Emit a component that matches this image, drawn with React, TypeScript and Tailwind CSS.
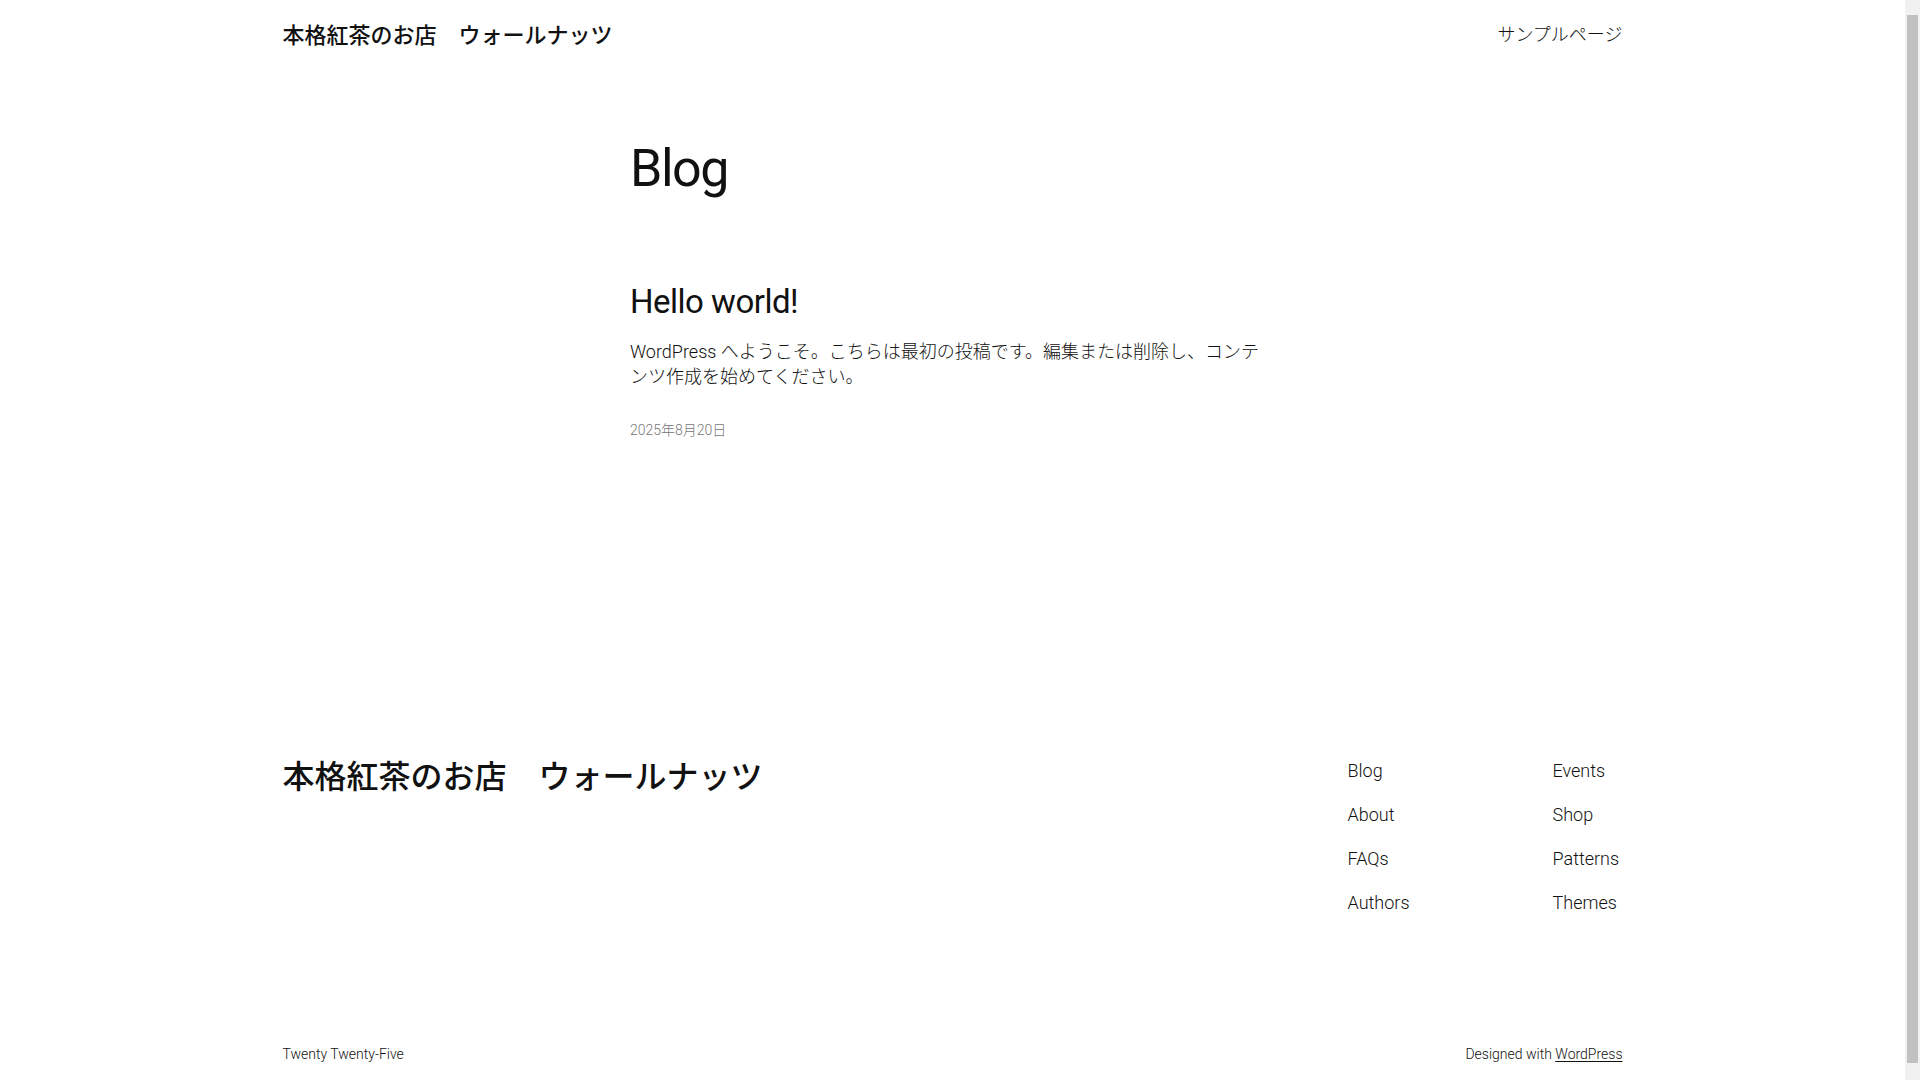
import React from 'react';

const footerCol1 = ['Blog', 'About', 'FAQs', 'Authors'];
const footerCol2 = ['Events', 'Shop', 'Patterns', 'Themes'];

export default function App() {
  return (
    <div className="h-screen flex overflow-hidden bg-white text-[#111111] font-[Roboto,'Noto_Sans_CJK_JP',sans-serif]">
      <div className="flex-1 min-w-0 overflow-y-auto">
        {/* Header */}
        <header className="mx-auto max-w-[1340px] h-[72px] flex items-center justify-between">
          <a href="#" className="text-[22px] font-medium leading-none">
            本格紅茶のお店　ウォールナッツ
          </a>
          <nav>
            <a href="#" className="text-[18px] font-light leading-none">
              サンプルページ
            </a>
          </nav>
        </header>

        {/* Main */}
        <main className="mx-auto max-w-[645px] pt-[66px]">
          <h1 className="text-[52px] leading-[1.2] font-normal tracking-[-1.5px]">Blog</h1>
          <article className="mt-[82px]">
            <h2 className="text-[33px] leading-[1.2] font-normal tracking-[-0.5px]">
              <a href="#">Hello world!</a>
            </h2>
            <p className="mt-[17px] text-[18px] leading-[25px] font-light">
              WordPress へようこそ。こちらは最初の投稿です。編集または削除し、コンテンツ作成を始めてください。
            </p>
            <p className="mt-[31px] text-[14px] leading-[20px] font-light text-[#777777]">
              2025年8月20日
            </p>
          </article>
        </main>

        {/* Footer */}
        <footer className="mx-auto max-w-[1340px] mt-[318px] pb-[30px]">
          <div className="flex items-start justify-between">
            <a href="#" className="text-[32px] font-medium leading-[38px]">
              本格紅茶のお店　ウォールナッツ
            </a>
            <div className="grid grid-cols-[205px_70px]">
              <ul className="flex flex-col gap-[19px] text-[18px] leading-[25px] font-light">
                {footerCol1.map((item) => (
                  <li key={item}>
                    <a href="#">{item}</a>
                  </li>
                ))}
              </ul>
              <ul className="flex flex-col gap-[19px] text-[18px] leading-[25px] font-light">
                {footerCol2.map((item) => (
                  <li key={item} className="whitespace-nowrap">
                    <a href="#">{item}</a>
                  </li>
                ))}
              </ul>
            </div>
          </div>
          <div className="mt-[129px] flex items-center justify-between text-[14px] leading-[20px] font-light">
            <p>Twenty Twenty-Five</p>
            <p>
              Designed with{' '}
              <a href="#" className="underline underline-offset-2">
                WordPress
              </a>
            </p>
          </div>
        </footer>
      </div>

      {/* Window scrollbar */}
      <div className="w-[15px] shrink-0 bg-[#f1f1f1] pt-[15px] pb-[17px] px-[2px] flex">
        <div className="flex-1 bg-[#c1c1c1]" />
      </div>
    </div>
  );
}
